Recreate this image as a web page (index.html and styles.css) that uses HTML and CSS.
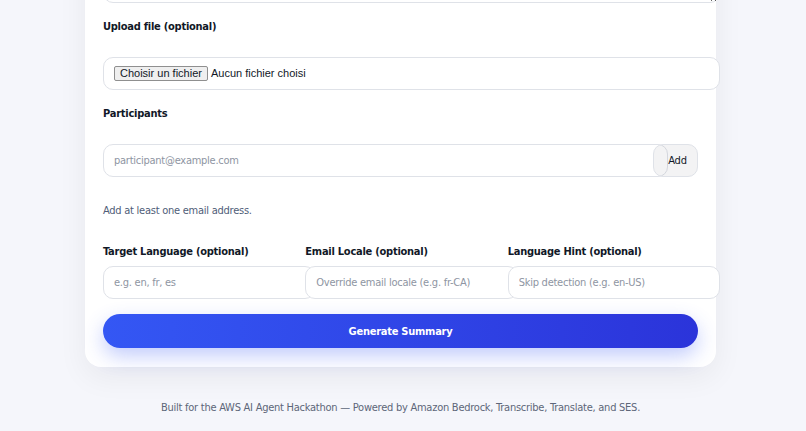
FILE: index.html
```html
<!DOCTYPE html>
<html lang="en">

<head>
    <meta charset="UTF-8">
    <meta name="viewport" content="width=device-width, initial-scale=1.0">
    <title>Meeting Summary</title>
    <link rel="stylesheet" href="styles.css">
</head>

<body>
    <main class="page">
        <section class="card">
            <form class="form" action="#" method="POST">
                <div class="field field-loose">
                    <label for="notes">Transcript or notes</label>
                    <textarea id="notes" name="notes"></textarea>
                </div>

                <div class="field field-loose">
                    <label>Upload file (optional)</label>
                    <div class="file-input">
                        <span class="file-btn">Choisir un fichier</span>
                        <span class="file-name">Aucun fichier choisi</span>
                    </div>
                </div>

                <div class="field field-loose">
                    <label for="participant">Participants</label>
                    <div class="participant-row">
                        <input type="email" id="participant" placeholder="participant@example.com">
                        <button type="button" class="btn-add">Add</button>
                    </div>
                    <p class="hint">Add at least one email address.</p>
                </div>

                <div class="lang-grid">
                    <div class="field">
                        <label for="target">Target Language (optional)</label>
                        <input type="text" id="target" placeholder="e.g. en, fr, es">
                    </div>
                    <div class="field">
                        <label for="locale">Email Locale (optional)</label>
                        <input type="text" id="locale" placeholder="Override email locale (e.g. fr-CA)">
                    </div>
                    <div class="field">
                        <label for="hint">Language Hint (optional)</label>
                        <input type="text" id="hint" placeholder="Skip detection (e.g. en-US)">
                    </div>
                </div>

                <button type="submit" class="btn-submit">Generate Summary</button>
            </form>
        </section>

        <footer class="footer">
            Built for the AWS AI Agent Hackathon — Powered by Amazon Bedrock, Transcribe, Translate, and SES.
        </footer>
    </main>
</body>

</html>
```

FILE: styles.css
```css
body {
    margin: 0;
    padding-right: 5px;
    background-color: #f5f6fb;
    font-family: "DejaVu Sans", Verdana, sans-serif;
    font-stretch: condensed;
    letter-spacing: -0.25px;
    color: #111827;
}

.page {
    width: 631px;
    margin: -191px auto 0;
}

.card {
    background-color: white;
    border-radius: 16px;
    padding: 18px 18px 19px;
    box-shadow: 0 10px 30px rgba(15, 23, 42, 0.06);
}

.form {
    display: flex;
    flex-direction: column;
    gap: 16px;
}

.field {
    display: flex;
    flex-direction: column;
}

label {
    display: block;
    font-size: 11px;
    line-height: 16px;
    font-weight: bold;
    margin-bottom: 6px;
}

.field-loose label {
    margin-bottom: 22px;
}

input[type="text"],
input[type="email"],
textarea,
.file-input {
    width: 100%;
    padding: 8px 10px;
    border: 1px solid #dfe2e8;
    border-radius: 10px;
    font-family: inherit;
    font-stretch: inherit;
    letter-spacing: inherit;
    font-size: 11px;
    line-height: 15px;
    color: #111827;
    background-color: white;
}

textarea {
    height: 120px;
    resize: vertical;
}

input::placeholder {
    color: #8e95a2;
}

.file-input {
    display: flex;
    align-items: center;
    gap: 3px;
    font-family: "Liberation Sans", Arial, sans-serif;
    font-stretch: normal;
    letter-spacing: 0;
}

.file-btn {
    padding: 0 5px;
    border: 1px solid #8f8f8f;
    border-radius: 2px;
    background-color: #efefef;
    line-height: 13px;
}

.participant-row {
    display: flex;
}

.participant-row input {
    flex: 1;
    min-width: 0;
    margin-right: -15px;
}

.btn-add {
    flex-shrink: 0;
    width: 45px;
    padding: 0 0 0 4px;
    border: 1px solid #dfe2e8;
    border-radius: 10px;
    background-color: rgba(15, 23, 42, 0.05);
    font-family: inherit;
    font-stretch: inherit;
    letter-spacing: inherit;
    font-size: 11px;
    color: #111827;
    cursor: pointer;
}

.hint {
    margin: 26px 0 9px;
    font-size: 11px;
    line-height: 16px;
    color: #4f5d78;
}

.lang-grid {
    display: grid;
    grid-template-columns: repeat(3, 1fr);
    gap: 12px;
}

.btn-submit {
    height: 34px;
    margin-top: -1px;
    border: none;
    border-radius: 999px;
    background: linear-gradient(90deg, #3457f4, #2b34da);
    box-shadow: 0 8px 20px rgba(52, 87, 244, 0.3);
    color: white;
    font-family: inherit;
    font-stretch: inherit;
    letter-spacing: inherit;
    font-size: 11px;
    font-weight: bold;
    cursor: pointer;
}

.footer {
    margin-top: 33px;
    text-align: center;
    font-size: 11px;
    line-height: 16px;
    color: #5d6679;
}
```
